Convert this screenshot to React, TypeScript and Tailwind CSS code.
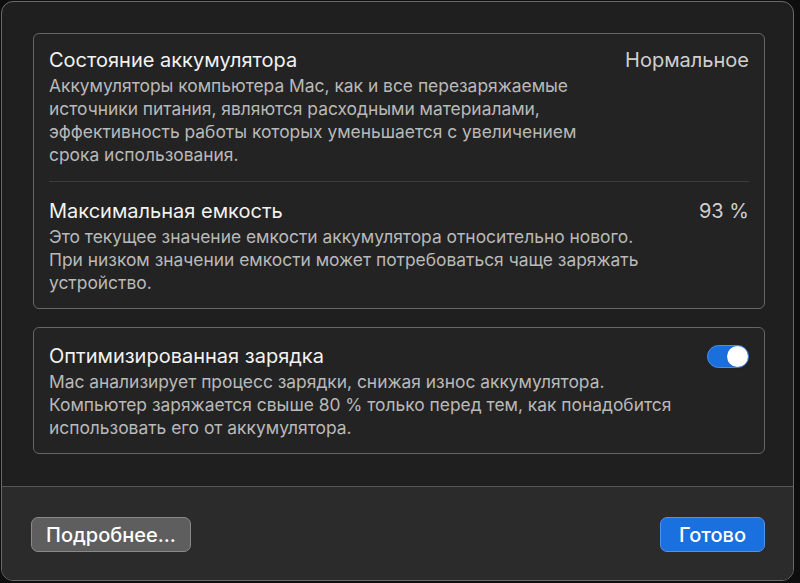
import { useState } from 'react'

function Toggle({ on, onChange }: { on: boolean; onChange: (v: boolean) => void }) {
  return (
    <button
      onClick={() => onChange(!on)}
      className={`relative h-[23px] w-[42px] shrink-0 rounded-full border ${
        on ? 'border-[#4a8fe8] bg-[#1b6fdc]' : 'border-[#5a5a5a] bg-[#3a3a3a]'
      }`}
    >
      <span
        className={`absolute top-[0px] h-[21px] w-[21px] rounded-full bg-white shadow ${
          on ? 'right-[0px]' : 'left-[0px]'
        }`}
      />
    </button>
  )
}

function Row({
  title,
  value,
  children,
}: {
  title: string
  value?: React.ReactNode
  children: React.ReactNode
}) {
  return (
    <div>
      <div className="flex h-[26px] items-center justify-between">
        <h2 className="text-[20px] leading-[26px] text-[#f2f2f2]">{title}</h2>
        {value}
      </div>
      <p className="mt-[1px] text-[17.4px] leading-[23px] text-[#b9b9b9]">{children}</p>
    </div>
  )
}

export default function App() {
  const [optimized, setOptimized] = useState(true)

  return (
    <div
      className="h-[583px] w-[800px] bg-[#0e0e0e] p-[1px] pr-[6px] pb-[2px]"
      style={{ fontFamily: 'Inter, "Noto Sans", sans-serif' }}
    >
      <div className="flex h-full flex-col overflow-hidden rounded-[12px] border border-[#6a6a6a] bg-[#1f1f1f]">
        <div className="flex flex-1 flex-col gap-[18px] pl-[31px] pr-[28px] pt-[31px]">
          <section className="rounded-[6px] border border-[#666] bg-[#232323] px-[15px] pt-[13px] pb-[14px]">
            <Row
              title="Состояние аккумулятора"
              value={<span className="text-[20px] leading-[26px] text-[#cfcfcf]">Нормальное</span>}
            >
              Аккумуляторы компьютера Mac, как и все перезаряжаемые
              <br />
              источники питания, являются расходными материалами,
              <br />
              эффективность работы которых уменьшается с увеличением
              <br />
              срока использования.
            </Row>
            <div className="mt-[15px] mb-[16px] h-px bg-[#3c3c3c]" />
            <Row
              title="Максимальная емкость"
              value={<span className="text-[20px] leading-[26px] text-[#cfcfcf]">93 %</span>}
            >
              Это текущее значение емкости аккумулятора относительно нового.
              <br />
              При низком значении емкости может потребоваться чаще заряжать
              <br />
              устройство.
            </Row>
          </section>

          <section className="rounded-[6px] border border-[#666] bg-[#232323] px-[15px] pt-[15px] pb-[14px]">
            <Row title="Оптимизированная зарядка" value={<Toggle on={optimized} onChange={setOptimized} />}>
              Mac анализирует процесс зарядки, снижая износ аккумулятора.
              <br />
              Компьютер заряжается свыше 80 % только перед тем, как понадобится
              <br />
              использовать его от аккумулятора.
            </Row>
          </section>
        </div>

        <footer className="flex h-[94px] items-start justify-between border-t border-[#555] bg-[#2b2b2b] px-[29px] pt-[30px]">
          <button className="h-[35px] rounded-[7px] border border-[#8a8a8a] bg-[#5e5e5e] px-[14px] text-[20px] font-medium text-white">
            Подробнее...
          </button>
          <button className="mr-[-1px] h-[35px] rounded-[7px] border border-[#4f93ea] bg-[#1a70de] px-[18px] text-[20px] font-medium text-white">
            Готово
          </button>
        </footer>
      </div>
    </div>
  )
}
